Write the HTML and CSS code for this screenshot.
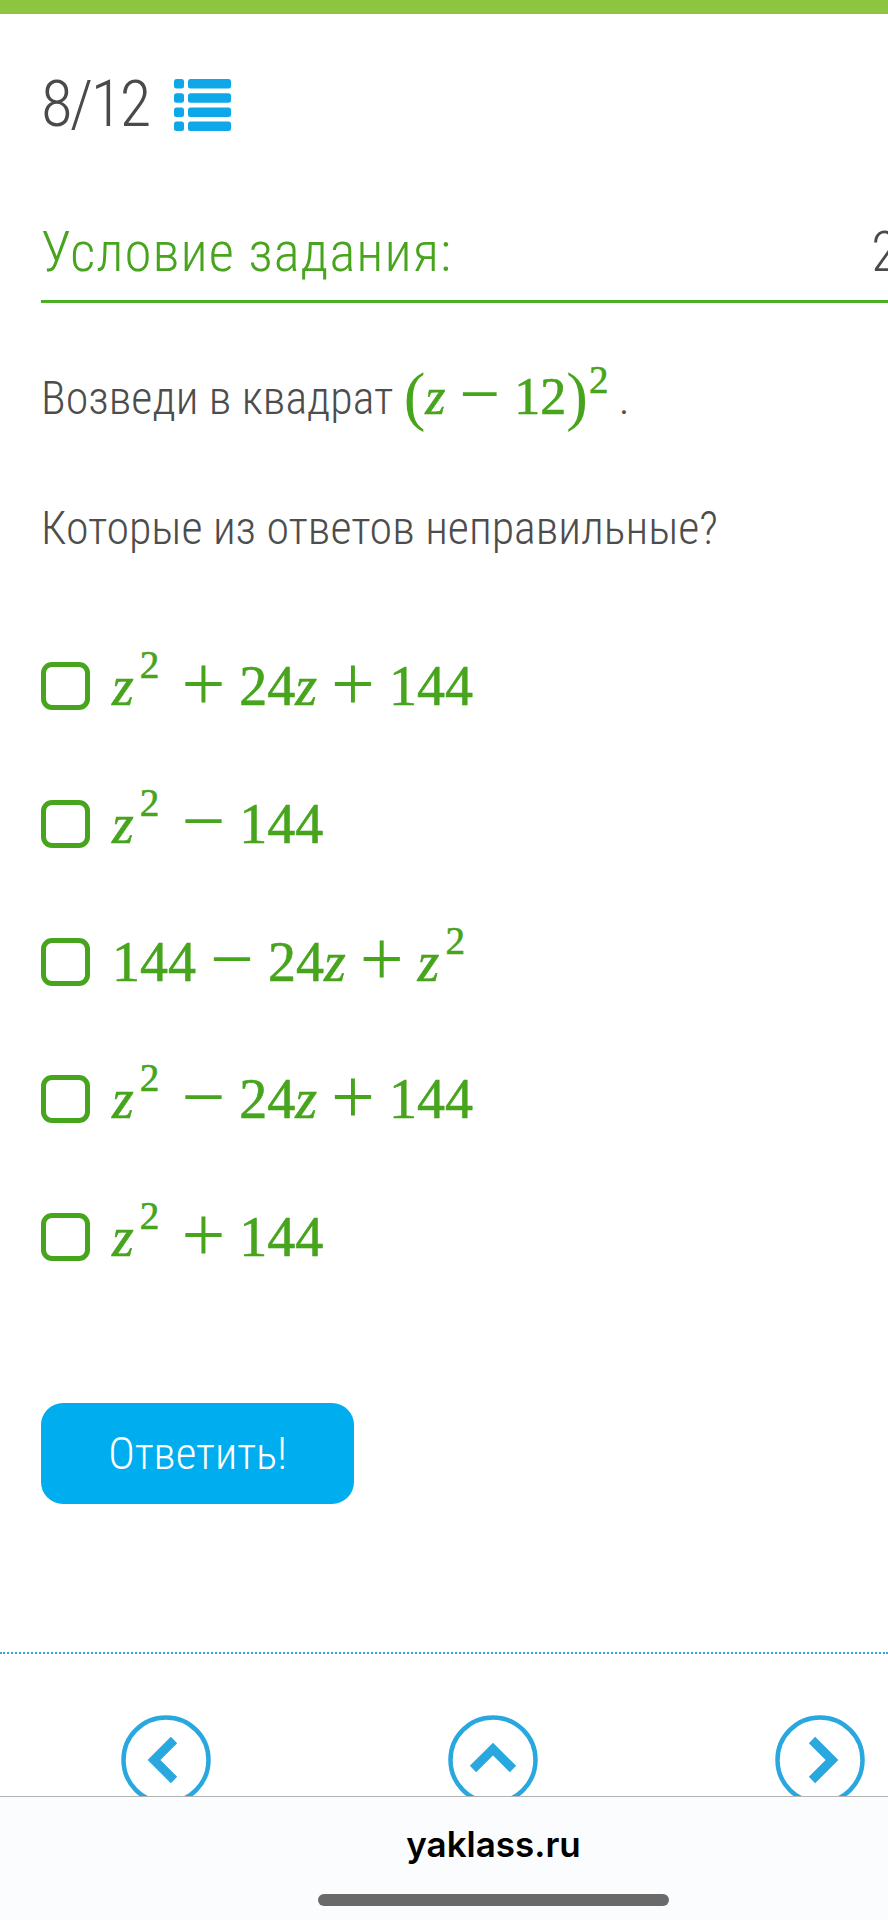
FILE: index.html
```html
<!DOCTYPE html>
<html lang="ru">
<head>
    <meta charset="UTF-8">
    <meta name="viewport" content="width=device-width, initial-scale=1.0">
    <title>ЯКласс — задание 8</title>
    <link rel="stylesheet" href="styles.css">
</head>
<body>
    <div class="status-line"></div>

    <main class="task">
        <div class="counter">
            <span class="counter-num">8/12</span>
            <svg class="list-icon" width="57" height="52" viewBox="0 0 57 52">
                <rect x="0" y="0" width="10" height="9.5" rx="2.5"/>
                <rect x="14" y="0" width="43" height="9.5" rx="2.5"/>
                <rect x="0" y="14.2" width="10" height="9.5" rx="2.5"/>
                <rect x="14" y="14.2" width="43" height="9.5" rx="2.5"/>
                <rect x="0" y="28.4" width="10" height="9.5" rx="2.5"/>
                <rect x="14" y="28.4" width="43" height="9.5" rx="2.5"/>
                <rect x="0" y="42.5" width="10" height="9.5" rx="2.5"/>
                <rect x="14" y="42.5" width="43" height="9.5" rx="2.5"/>
            </svg>
        </div>

        <div class="task-head">
            <h2 class="task-title">Условие задания:</h2>
            <span class="task-points">2 б.</span>
        </div>

        <p class="q q-first">Возведи в квадрат <span class="math"><span class="paren">(</span><i>z</i><span class="op">−</span>12<span class="paren">)</span><sup>2</sup></span> .</p>
        <p class="q q-second">Которые из ответов неправильные?</p>

        <ul class="options">
            <li class="option">
                <span class="checkbox"></span>
                <span class="math"><i>z</i><sup>2</sup><span class="op">+</span>24<i>z</i><span class="op">+</span>144</span>
            </li>
            <li class="option">
                <span class="checkbox"></span>
                <span class="math"><i>z</i><sup>2</sup><span class="op">−</span>144</span>
            </li>
            <li class="option">
                <span class="checkbox"></span>
                <span class="math">144<span class="op">−</span>24<i>z</i><span class="op">+</span><i>z</i><sup>2</sup></span>
            </li>
            <li class="option">
                <span class="checkbox"></span>
                <span class="math"><i>z</i><sup>2</sup><span class="op">−</span>24<i>z</i><span class="op">+</span>144</span>
            </li>
            <li class="option">
                <span class="checkbox"></span>
                <span class="math"><i>z</i><sup>2</sup><span class="op">+</span>144</span>
            </li>
        </ul>

        <button class="answer-btn">Ответить!</button>
    </main>

    <nav class="task-nav">
        <a class="nav-btn" href="#">
            <svg width="90" height="90" viewBox="0 0 90 90">
                <circle cx="45" cy="45" r="42.5"/>
                <polyline points="53,25 33,45 53,65"/>
            </svg>
        </a>
        <a class="nav-btn" href="#">
            <svg width="90" height="90" viewBox="0 0 90 90">
                <circle cx="45" cy="45" r="42.5"/>
                <polyline points="25,54 45,34 65,54"/>
            </svg>
        </a>
        <a class="nav-btn" href="#">
            <svg width="90" height="90" viewBox="0 0 90 90">
                <circle cx="45" cy="45" r="42.5"/>
                <polyline points="37,25 57,45 37,65"/>
            </svg>
        </a>
    </nav>

    <footer class="browser-bar">
        <div class="url">yaklass.ru</div>
        <div class="home-bar"></div>
    </footer>
</body>
</html>
```

FILE: styles.css
```css
* {
    box-sizing: border-box;
}
body {
    margin: 0;
    background: #fff;
    font-family: "Roboto Condensed", Roboto, sans-serif;
    font-stretch: condensed;
    font-weight: 300;
    color: #4a4a4a;
}
.status-line {
    height: 14px;
    background: #8dc540;
}
.task {
    padding: 0 0 0 41px;
}
.counter {
    display: flex;
    align-items: center;
    height: 67px;
    margin-top: 57px;
}
.counter-num {
    font-size: 65px;
    line-height: 67px;
    letter-spacing: -2.5px;
}
.list-icon {
    margin-left: 25px;
    fill: #0ea8e8;
}
.task-head {
    display: flex;
    align-items: baseline;
    margin-top: 82px;
    padding-bottom: 16px;
    border-bottom: 3px solid #4cae22;
    overflow: hidden;
}
.task-title {
    margin: 0;
    font-size: 55px;
    line-height: 64px;
    letter-spacing: 1px;
    font-weight: 300;
    color: #48a41e;
}
.task-points {
    flex-shrink: 0;
    margin-left: auto;
    margin-right: -62px;
    font-size: 55px;
    line-height: 64px;
}
.q {
    margin: 0;
    font-size: 46px;
    line-height: 56px;
    color: #4d4d4d;
}
.q-first {
    margin-top: 67px;
}
.q-second {
    margin-top: 74px;
}
.math {
    font-family: "Liberation Serif", serif;
    font-stretch: normal;
    font-weight: 400;
    font-size: 52px;
    line-height: 1;
    color: #47a41d;
    white-space: nowrap;
    -webkit-text-stroke: 0.6px #47a41d;
}
.math i {
    font-style: italic;
}
.math sup {
    font-size: 0.75em;
    line-height: 0;
    vertical-align: 21px;
    margin-left: 1px;
}
.math .op {
    font-size: 1.39em;
    line-height: 0;
    margin: 0 14px;
    vertical-align: -0.06em;
    -webkit-text-stroke: 0;
}
.math .paren {
    font-size: 1.25em;
    line-height: 0;
    vertical-align: -0.054em;
    -webkit-text-stroke: 0;
}
.options {
    list-style: none;
    margin: 102px 0 0;
    padding: 0;
    display: flex;
    flex-direction: column;
    gap: 81.75px;
}
.option {
    display: flex;
    align-items: center;
    gap: 22px;
    height: 56px;
}
.checkbox {
    flex-shrink: 0;
    width: 49px;
    height: 48px;
    border: 5px solid #47a41d;
    border-radius: 11px;
}
.option .math {
    font-size: 56px;
}
.option .math sup {
    font-size: 0.7em;
    vertical-align: 27px;
    margin: 0 8px 0 6px;
}
.answer-btn {
    display: flex;
    align-items: center;
    justify-content: center;
    width: 313px;
    height: 101px;
    margin-top: 138px;
    padding: 0;
    border: none;
    border-radius: 22px;
    background: #00adef;
    color: #fff;
    font-family: inherit;
    font-stretch: condensed;
    font-weight: 300;
    font-size: 45px;
    cursor: pointer;
}
.task-nav {
    display: flex;
    gap: 237px;
    height: 144px;
    margin-top: 148px;
    padding: 61px 0 0 121px;
    border-top: 2px dotted #37a4d8;
    overflow: hidden;
}
.nav-btn svg {
    display: block;
    fill: none;
    stroke: #29a7df;
}
.nav-btn circle {
    stroke-width: 4.5;
}
.nav-btn polyline {
    stroke-width: 9;
    stroke-linejoin: miter;
    stroke-linecap: butt;
}
.browser-bar {
    height: 124px;
    padding: 27px 0 0 99px;
    border-top: 1px solid #b2b2b2;
    background: #fbfcfd;
    display: flex;
    flex-direction: column;
    align-items: center;
}
.url {
    font-family: Inter, "Noto Sans", sans-serif;
    font-stretch: normal;
    font-weight: 600;
    font-size: 35px;
    line-height: 40px;
    color: #000;
}
.home-bar {
    width: 351px;
    height: 12px;
    margin-top: 30px;
    border-radius: 6px;
    background: #6a6a6a;
}
```
